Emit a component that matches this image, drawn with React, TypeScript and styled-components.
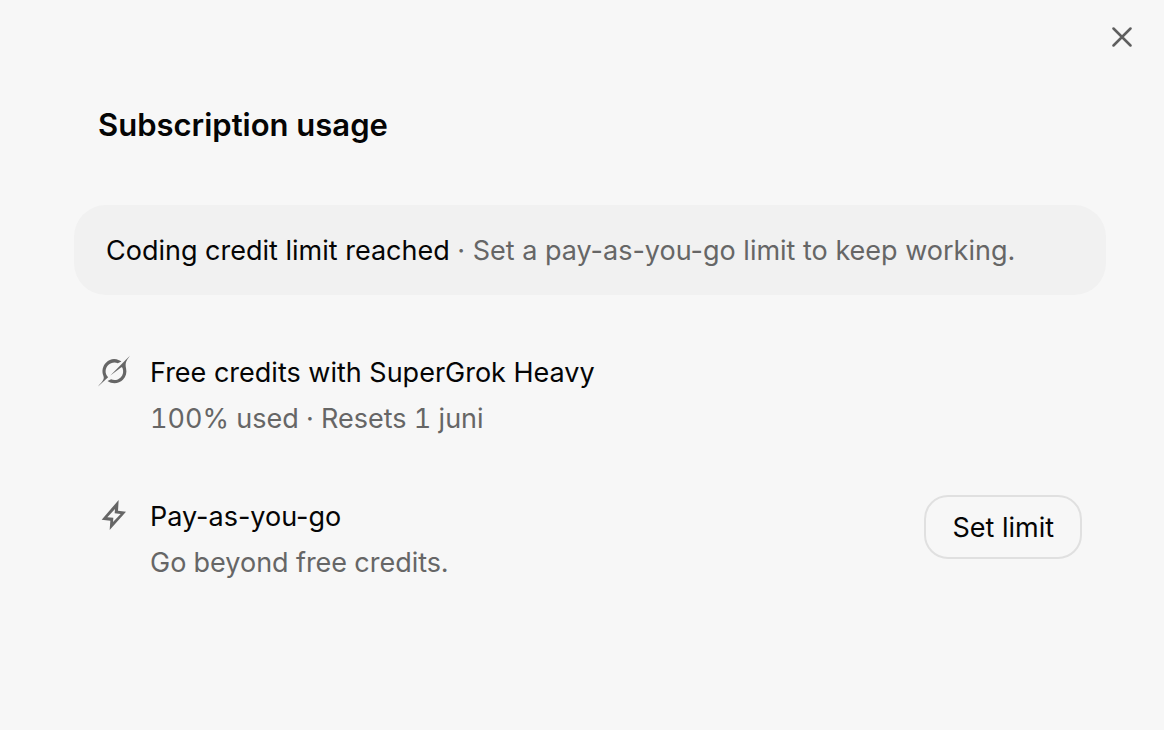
import React from "react";
import styled, { createGlobalStyle } from "styled-components";

const GlobalStyle = createGlobalStyle`
  *, *::before, *::after { box-sizing: border-box; }
  body {
    margin: 0;
    background: #f7f7f7;
    color: #050505;
    font-family: Inter, "Liberation Sans", sans-serif;
    font-size: 27px;
    line-height: 44px;
  }
`;

const Panel = styled.main`
  padding: 12px 16px 48px 74px;
`;

const TopBar = styled.header`
  display: flex;
  justify-content: flex-end;
`;

const CloseButton = styled.button`
  display: flex;
  align-items: center;
  justify-content: center;
  width: 52px;
  height: 50px;
  padding: 0;
  border: 0;
  border-radius: 16px;
  background: transparent;
  color: #5f5f5f;
  cursor: pointer;
`;

const Content = styled.div`
  margin-right: 42px;
`;

const Title = styled.h1`
  margin: 0;
  padding: 39px 24px 56px;
  font-size: 31px;
  line-height: 48px;
  font-weight: 600;
`;

const Notice = styled.p`
  margin: 0;
  padding: 24px 32px 22px;
  border-radius: 32px;
  background: #f1f1f1;
`;

const Muted = styled.span`
  color: #666666;
`;

const UsageList = styled.ul`
  display: flex;
  flex-direction: column;
  gap: 54px;
  margin: 0;
  padding: 56px 24px 0;
  list-style: none;
`;

const UsageItem = styled.li`
  display: flex;
  align-items: flex-start;
  gap: 20px;
`;

const IconSlot = styled.span`
  display: flex;
  align-items: center;
  flex: none;
  height: 40px;
  color: #666666;
`;

const UsageText = styled.div`
  display: flex;
  flex: 1;
  flex-direction: column;
  gap: 2px;
`;

const UsageTitle = styled.h2`
  margin: 0;
  font-size: 27px;
  line-height: 44px;
  font-weight: 400;
`;

const UsageDetail = styled.p`
  margin: 0;
  color: #666666;
  font-variant-numeric: tabular-nums;
`;

const OutlineButton = styled.button`
  flex: none;
  height: 64px;
  padding: 2px 26px 0;
  border: 2px solid #e0e0e0;
  border-radius: 24px;
  background: transparent;
  color: inherit;
  font: inherit;
  cursor: pointer;
`;

const CloseIcon = () => (
  <svg width="20" height="20" viewBox="0 0 20 20" fill="none" stroke="currentColor" strokeWidth="2.5" strokeLinecap="round" aria-hidden="true">
    <path d="M1.5 1.5l17 17M18.5 1.5l-17 17" />
  </svg>
);

const GrokIcon = () => (
  <svg width="32" height="32" viewBox="0 0 24 24" fill="currentColor" aria-hidden="true">
    <path d="M9.27 15.29l7.978-5.897c.391-.29.95-.177 1.137.272.98 2.369.542 5.215-1.41 7.169-1.951 1.954-4.667 2.382-7.149 1.406l-2.711 1.257c3.889 2.661 8.611 2.003 11.562-.953 2.341-2.344 3.066-5.539 2.388-8.42l.006.007c-.983-4.232.242-5.924 2.75-9.383.06-.082.12-.164.179-.248l-3.301 3.305v-.01L9.267 15.292M7.623 16.723c-2.792-2.67-2.31-6.801.071-9.184 1.761-1.763 4.647-2.483 7.166-1.425l2.705-1.25a7.808 7.808 0 00-1.829-1A8.975 8.975 0 005.984 5.83c-2.533 2.536-3.33 6.436-1.962 9.764 1.022 2.487-.653 4.246-2.34 6.022-.599.63-1.199 1.259-1.682 1.925l7.62-6.815" />
  </svg>
);

const BoltIcon = () => (
  <svg width="32" height="32" viewBox="0 0 96 96" fill="currentColor" fillRule="evenodd" aria-hidden="true">
    <path d="M62 3L60 35L84 38L35 93L37 65L11 62ZM51 30L28 55L46 56L45 69L68 45L50 43Z" />
  </svg>
);

export default function App() {
  return (
    <>
      <GlobalStyle />
      <Panel>
        <TopBar>
          <CloseButton type="button" aria-label="Close">
            <CloseIcon />
          </CloseButton>
        </TopBar>
        <Content>
          <Title>Subscription usage</Title>
          <Notice>
            Coding credit limit reached{" "}
            <Muted>· Set a pay-as-you-go limit to keep working.</Muted>
          </Notice>
          <UsageList>
            <UsageItem>
              <IconSlot>
                <GrokIcon />
              </IconSlot>
              <UsageText>
                <UsageTitle>Free credits with SuperGrok Heavy</UsageTitle>
                <UsageDetail>100% used · Resets 1 juni</UsageDetail>
              </UsageText>
            </UsageItem>
            <UsageItem>
              <IconSlot>
                <BoltIcon />
              </IconSlot>
              <UsageText>
                <UsageTitle>Pay-as-you-go</UsageTitle>
                <UsageDetail>Go beyond free credits.</UsageDetail>
              </UsageText>
              <OutlineButton type="button">Set limit</OutlineButton>
            </UsageItem>
          </UsageList>
        </Content>
      </Panel>
    </>
  );
}
